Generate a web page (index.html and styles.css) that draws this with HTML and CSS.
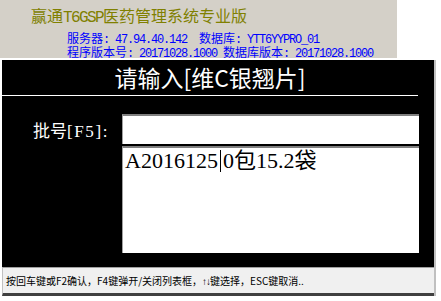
FILE: index.html
```html
<!DOCTYPE html>
<html lang="zh-CN">
<head>
  <meta charset="UTF-8" />
  <title>赢通T6GSP医药管理系统专业版</title>
  <link rel="stylesheet" href="styles.css">
</head>
<body>
  <div class="header">
    <div class="app-name">赢通<span class="half">T6GSP</span>医药管理系统专业版</div>
    <div class="server-info">
      <div>服务器<span class="half">: 47.94.40.142  </span>数据库<span class="half">: YTT6YYPRO_01</span></div>
      <div>程序版本号<span class="half">: 20171028.1000 </span>数据库版本<span class="half">: 20171028.1000</span></div>
    </div>
    <div class="copyright">版权所有(C) 深圳市赢通软件科技有限公司</div>
  </div>
  <div class="dialog">
    <div class="dialog-title">请输入[维C银翘片]</div>
    <div class="field-row">
      <label class="field-label">批号<span class="wide">[F5]:</span></label>
      <div class="field-input"></div>
    </div>
    <div class="list-box">
      <div class="list-item">A2016125<span class="caret"></span>0包15.2袋</div>
    </div>
    <div class="status-bar">按回车键或F2确认，F4键弹开/关闭列表框，<span class="arrows">↑↓</span>键选择，ESC键取消..</div>
  </div>
</body>
</html>
```
FILE: styles.css
```css
body {
  margin: 0;
  background: #fff;
  font-family: "Noto Sans CJK SC", sans-serif;
}
.header {
  width: 397px;
  height: 58px;
  box-sizing: border-box;
  padding: 5px 0 0 31px;
  background: #d4d0c8;
  overflow: hidden;
}
.half {
  font-family: "Liberation Mono", monospace;
  letter-spacing: -0.1em;
  white-space: pre;
}
.app-name {
  font-size: 16px;
  line-height: 20px;
  color: #808000;
  margin-bottom: 4px;
}
.server-info {
  margin-left: 36px;
  font-size: 12px;
  line-height: 12px;
  color: #0000ff;
}
.copyright {
  font-size: 14px;
  line-height: 16px;
  color: #404040;
  margin-left: 1px;
}
.dialog {
  margin: 2px 0 0 2px;
  width: 432px;
  background: #000;
  border-right: 2px solid #c0c0c0;
}
.dialog-title {
  width: 416px;
  height: 35px;
  line-height: 35px;
  border-bottom: 1px solid #fff;
  text-align: center;
  font-size: 23px;
  color: #fff;
}
.field-row {
  display: flex;
  align-items: center;
  padding-top: 18px;
}
.field-label {
  width: 120px;
  box-sizing: border-box;
  padding-left: 31px;
  font-family: "Liberation Serif", "Noto Sans CJK SC", serif;
  font-size: 17px;
  color: #fff;
}
.field-label .wide {
  letter-spacing: 1.6px;
}
.field-input {
  width: 297px;
  height: 30px;
  box-sizing: border-box;
  background: #fff;
  border-top: 2px solid #808080;
  border-left: 1px solid #a0a0a0;
}
.list-box {
  margin: 2px 0 0 120px;
  width: 297px;
  height: 107px;
  box-sizing: border-box;
  background: #fff;
  border-top: 2px solid #808080;
  border-left: 1px solid #a0a0a0;
}
.list-item {
  padding-left: 2px;
  font-family: "Liberation Serif", "Noto Sans CJK SC", serif;
  font-size: 22px;
  line-height: 26px;
  color: #000;
}
.caret {
  display: inline-block;
  width: 1px;
  height: 22px;
  margin: 0 2px;
  background: #000;
  vertical-align: -4px;
}
.status-bar {
  margin-top: 14px;
  height: 29px;
  box-sizing: border-box;
  padding-left: 3px;
  background: #f0f0f0;
  border-top: 1px solid #a0a0a0;
  border-left: 1px solid #c0c0c0;
  border-bottom: 3px solid #404040;
  font-size: 10px;
  line-height: 25px;
  color: #000;
}
.arrows {
  font-family: "Liberation Sans", sans-serif;
  letter-spacing: -1px;
}
```
